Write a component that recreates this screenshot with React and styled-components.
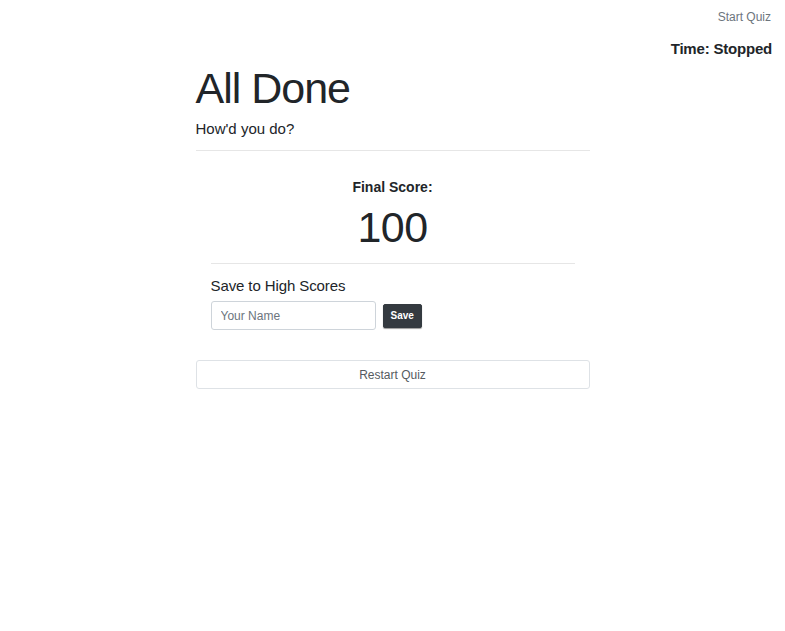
import styled, { createGlobalStyle } from "styled-components";

const GlobalStyle = createGlobalStyle`
  body {
    margin: 0;
    font-family: "Liberation Sans", Arial, sans-serif;
    color: #212529;
    background: #fff;
  }
  * { box-sizing: border-box; }
`;

const TopBar = styled.div`
  display: flex;
  flex-direction: column;
  align-items: flex-end;
  padding: 10px 12px 0 0;
`;

const NavLink = styled.a`
  font-size: 12px;
  color: #6c757d;
  margin-right: 2px;
  line-height: 15px;
  cursor: pointer;
`;

const Timer = styled.div`
  margin-top: 15px;
  margin-right: 1px;
  font-size: 15px;
  font-weight: 700;
  line-height: 18px;
  letter-spacing: -0.2px;
`;

const Main = styled.div`
  width: 394px;
  margin: 0 auto;
`;

const Title = styled.h1`
  margin: 4px 0 0;
  font-size: 43px;
  font-weight: 300;
  line-height: 52px;
  letter-spacing: -1px;
`;

const Lead = styled.p`
  margin: 5px 0 0;
  font-size: 15px;
  line-height: 20px;
`;

const Rule = styled.hr`
  border: 0;
  border-top: 1px solid #e6e6e6;
  margin: ${(p) => p.$margin || "11px 0 0"};
`;

const ScoreBox = styled.div`
  padding: 0 15px;
  text-align: center;
`;

const ScoreLabel = styled.div`
  margin-top: 27px;
  font-size: 14px;
  font-weight: 700;
  line-height: 18px;
`;

const ScoreValue = styled.div`
  margin-top: 6px;
  font-size: 43px;
  font-weight: 300;
  line-height: 50px;
  letter-spacing: -0.5px;
`;

const SaveSection = styled.div`
  padding: 0 15px;
`;

const SaveTitle = styled.div`
  margin-top: 12px;
  font-size: 15px;
  line-height: 20px;
  letter-spacing: -0.1px;
`;

const SaveRow = styled.div`
  display: flex;
  align-items: center;
  gap: 7px;
  margin-top: 5px;
`;

const NameInput = styled.input`
  width: 165px;
  height: 29px;
  border: 1px solid #ced4da;
  border-radius: 3px;
  padding: 0 9px;
  font-family: inherit;
  font-size: 12px;
  color: #495057;
  &::placeholder { color: #6c757d; }
`;

const SaveButton = styled.button`
  height: 24px;
  padding: 0 7px;
  background: #343a40;
  color: #fff;
  border: 1px solid #343a40;
  border-radius: 2px;
  font-family: inherit;
  font-size: 10px;
  font-weight: 700;
  box-shadow: 0 1px 1px rgba(0, 0, 0, 0.4);
`;

const RestartButton = styled.button`
  display: block;
  width: 100%;
  height: 29px;
  margin-top: 30px;
  background: #fff;
  border: 1px solid #dee2e6;
  border-radius: 3px;
  font-family: inherit;
  font-size: 12px;
  color: #555b61;
`;

export default function App() {
  return (
    <>
      <GlobalStyle />
      <TopBar>
        <NavLink>Start Quiz</NavLink>
        <Timer>Time: Stopped</Timer>
      </TopBar>
      <Main>
        <Title>All Done</Title>
        <Lead>How'd you do?</Lead>
        <Rule />
        <ScoreBox>
          <ScoreLabel>Final Score:</ScoreLabel>
          <ScoreValue>100</ScoreValue>
          <Rule $margin="11px 0 0" />
        </ScoreBox>
        <SaveSection>
          <SaveTitle>Save to High Scores</SaveTitle>
          <SaveRow>
            <NameInput placeholder="Your Name" />
            <SaveButton>Save</SaveButton>
          </SaveRow>
        </SaveSection>
        <RestartButton>Restart Quiz</RestartButton>
      </Main>
    </>
  );
}
